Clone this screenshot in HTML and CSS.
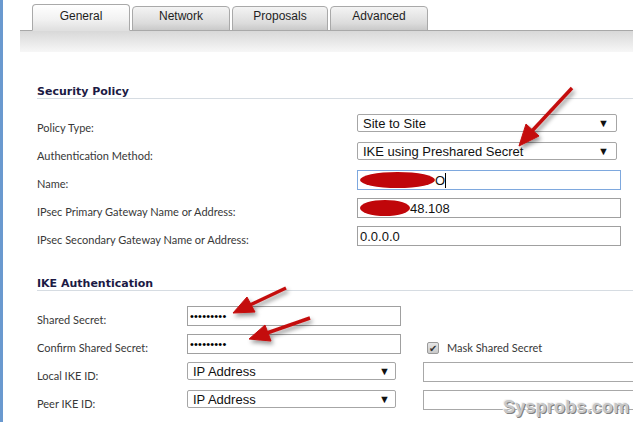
FILE: index.html
```html
<!DOCTYPE html>
<html lang="en">
  <head>
    <meta charset="UTF-8" />
    <title>VPN Policy</title>
    <link rel="stylesheet" href="styles.css">
  </head>
  <body>
    <div class="page">
      <div class="sidebar"></div>
      <div class="main">
        <div class="tabs">
          <div class="tab active">General</div>
          <div class="tab">Network</div>
          <div class="tab">Proposals</div>
          <div class="tab">Advanced</div>
        </div>
        <div class="tabbar"></div>

        <div class="section">
          <h2>Security Policy</h2>
          <div class="rows policy">
            <label>Policy Type:</label>
            <div class="select wide">Site to Site<span class="caret">&#9660;</span></div>

            <label>Authentication Method:</label>
            <div class="select wide">IKE using Preshared Secret<span class="caret">&#9660;</span></div>

            <label>Name:</label>
            <div class="input wide focus"><span class="blob name-blob"></span>O<span class="cursor"></span></div>

            <label>IPsec Primary Gateway Name or Address:</label>
            <div class="input wide"><span class="blob ip-blob"></span>48.108</div>

            <label>IPsec Secondary Gateway Name or Address:</label>
            <div class="input wide">0.0.0.0</div>
          </div>
        </div>

        <div class="section ike">
          <h2>IKE Authentication</h2>
          <div class="rows auth">
            <label>Shared Secret:</label>
            <div class="input secret">&bull;&bull;&bull;&bull;&bull;&bull;&bull;&bull;&bull;</div>
            <div></div>

            <label>Confirm Shared Secret:</label>
            <div class="input secret">&bull;&bull;&bull;&bull;&bull;&bull;&bull;&bull;&bull;</div>
            <div class="check"><span class="box">&#10004;</span>Mask Shared Secret</div>

            <label>Local IKE ID:</label>
            <div class="select small">IP Address<span class="caret">&#9660;</span></div>
            <div class="input extra"></div>

            <label>Peer IKE ID:</label>
            <div class="select small">IP Address<span class="caret">&#9660;</span></div>
            <div class="input extra"></div>
          </div>
        </div>
      </div>
    </div>

    <svg class="marks" width="633" height="422" viewBox="0 0 633 422">
      <defs>
        <filter id="shadow" x="-20%" y="-20%" width="140%" height="140%">
          <feDropShadow dx="2" dy="3" stdDeviation="2" flood-color="#000" flood-opacity="0.4" />
        </filter>
      </defs>
      <g fill="#c40d0d" stroke="#c40d0d" filter="url(#shadow)">
        <line x1="572" y1="88" x2="532" y2="131" stroke-width="3.5" />
        <polygon points="519,146 539,136 526,124" stroke-width="1" />
        <line x1="286" y1="288" x2="250" y2="305" stroke-width="3.5" />
        <polygon points="233,313 255,312 247,297" stroke-width="1" />
        <line x1="310" y1="318" x2="267" y2="333" stroke-width="3.5" />
        <polygon points="249,339 271,341 265,325" stroke-width="1" />
      </g>
    </svg>
    <div class="watermark">Sysprobs.com</div>
  </body>
</html>
```
FILE: styles.css
```css
* {
  box-sizing: border-box;
}
body {
  margin: 0;
  font-family: Lato, "Liberation Sans", sans-serif;
  font-size: 11px;
  color: #383838;
  background: #fff;
  overflow: hidden;
  width: 633px;
  height: 422px;
  position: relative;
}

.page {
  display: flex;
  height: 422px;
}
.sidebar {
  width: 3px;
  background-color: #6a99cf;
  flex-shrink: 0;
}
.main {
  flex: 1;
  min-width: 0;
}

.tabs {
  display: flex;
  align-items: flex-end;
  gap: 2px;
  height: 30px;
  padding-top: 4px;
  margin-left: 29px;
  position: relative;
  z-index: 1;
}
.tab {
  width: 98px;
  height: 25px;
  margin-bottom: -1px;
  padding-top: 2px;
  text-align: center;
  font-family: "Liberation Sans", Arial, sans-serif;
  font-size: 12px;
  color: #1e1e1e;
  border: 1px solid #a9a9a9;
  border-radius: 4px 4px 0 0;
  background: linear-gradient(#f4f4f4, #dcdcdc 70%, #c9c9c9);
}
.tab.active {
  height: 27px;
  padding-top: 4px;
  border-bottom-color: #e0e0e0;
  background: linear-gradient(#ffffff, #f1f1f1 60%, #e0e0e0);
}
.tab:nth-child(3) {
  width: 96px;
}

.tabbar {
  margin-left: 17px;
  height: 22px;
  border-top: 1px solid #a8a8a8;
  background: linear-gradient(#d8d8d8, #f7f7f7);
}

.section {
  margin: 32px 0 0 34px;
}
.section.ike {
  margin-top: 24px;
}
h2 {
  margin: 0;
  height: 15px;
  font-family: "DejaVu Sans", Verdana, sans-serif;
  font-size: 11px;
  line-height: 15px;
  font-weight: bold;
  color: #1c1a44;
  border-bottom: 1px solid #d6dce2;
}

.rows {
  display: grid;
  grid-auto-rows: 28px;
  margin-top: 13px;
}
.policy {
  grid-template-columns: 320px 270px;
}
.auth {
  grid-template-columns: 150px 236px 240px;
}

label {
  padding-top: 9px;
  line-height: 14px;
  white-space: nowrap;
}

.select,
.input {
  margin-top: 2px;
  display: flex;
  align-items: center;
  font-family: "Liberation Sans", Arial, sans-serif;
  font-size: 13px;
  color: #111;
  background: #fff;
  white-space: nowrap;
}
.select {
  height: 18px;
  padding: 0 7px 0 5px;
  border: 1px solid #a6a6a6;
  border-radius: 2px;
  justify-content: space-between;
}
.input {
  height: 20px;
  padding: 0 2px;
  border: 1px solid #a0a0a0;
}
.select.wide {
  width: 260px;
}
.input.wide {
  width: 264px;
}
.input.focus {
  border-color: #7ea8de;
}
.select.small {
  width: 209px;
  padding-right: 5px;
}
.input.secret {
  width: 214px;
  font-size: 11px;
  letter-spacing: 0.2px;
  color: #000;
}
.input.extra {
  width: 240px;
  border-color: #a8a8a8;
}
.caret {
  font-size: 11px;
  color: #111;
}

.blob {
  display: inline-block;
  height: 16px;
  border-radius: 50%;
  background-color: #c0060a;
}
.name-blob {
  width: 75px;
}
.ip-blob {
  width: 50px;
}
.cursor {
  display: inline-block;
  width: 1px;
  height: 15px;
  background: #000;
}

.check {
  display: flex;
  align-items: center;
  gap: 8px;
  padding-top: 3px;
  padding-left: 4px;
  height: 28px;
  line-height: 14px;
}
.check .box {
  width: 12px;
  height: 12px;
  border: 1px solid #9a9a9a;
  border-radius: 2px;
  background: linear-gradient(#e6e6e6, #c9c9c9);
  font-size: 10px;
  line-height: 10px;
  text-align: center;
  color: #333;
}

.marks {
  position: absolute;
  left: 0;
  top: 0;
  pointer-events: none;
}
.watermark {
  position: absolute;
  left: 503px;
  top: 397px;
  font-family: "Liberation Sans", Arial, sans-serif;
  font-size: 18px;
  font-weight: bold;
  color: #c8c8c8;
  text-shadow: 1px 1px 0 #808080, -1px -1px 0 #f4f4f4;
  letter-spacing: 0.2px;
}
```
